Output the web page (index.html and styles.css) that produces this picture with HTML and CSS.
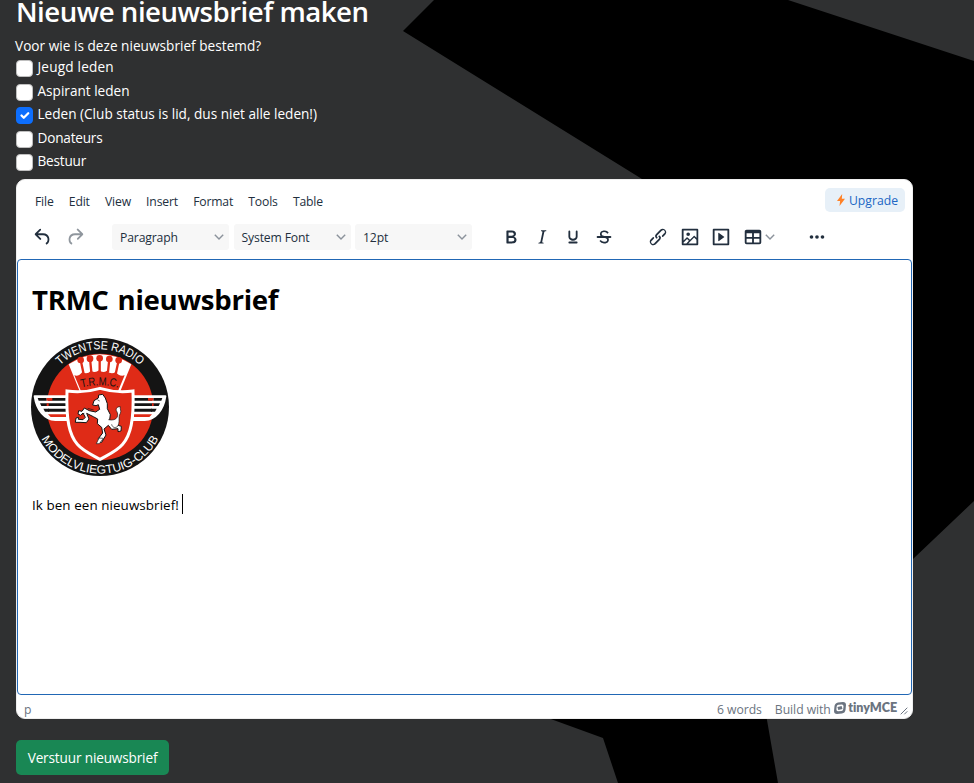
FILE: index.html
```html
<!DOCTYPE html>
<html lang="nl">
<head>
<meta charset="utf-8">
<title>Nieuwe nieuwsbrief maken</title>
<link rel="stylesheet" href="styles.css">
</head>
<body>
<svg class="backdrop" viewBox="0 0 974 783" aria-hidden="true"><path d="M434 0H788L974 61V501L913 559L760 680L778 783H618L603 738L548 718L642 179L403 31Z"/></svg>
<main class="page">
  <h1 class="title"><span>Nieuwe nieuwsbrief maken</span></h1>
  <p class="question">Voor wie is deze nieuwsbrief bestemd?</p>
  <div class="options">
    <label class="option"><i class="box"></i><span class="wide">Jeugd leden</span></label>
    <label class="option"><i class="box"></i><span>Aspirant leden</span></label>
    <label class="option"><i class="box checked"><svg viewBox="0 0 20 20"><path d="m6 10 3 3 6-6"/></svg></i><span>Leden (Club status is lid, dus niet alle leden!)</span></label>
    <label class="option"><i class="box"></i><span class="tight">Donateurs</span></label>
    <label class="option"><i class="box"></i><span class="tight">Bestuur</span></label>
  </div>
  <section class="editor">
    <header class="menubar">
      <nav class="menus"><span>File</span><span>Edit</span><span>View</span><span>Insert</span><span>Format</span><span>Tools</span><span>Table</span></nav>
      <a class="upgrade"><svg viewBox="0 0 8 12"><path d="M5.2 0 0 7h3.1L2.5 12 8 4.8H4.8Z"/></svg><span>Upgrade</span></a>
    </header>
    <div class="toolbar">
      <div class="group history">
        <svg class="icon" viewBox="0 0 24 24"><path d="M6.4 8H12c3.7 0 6.2 2 6.8 5.1.6 2.7-.4 5.6-2.3 6.8a1 1 0 0 1-1-1.8c1.1-.6 1.8-2.7 1.4-4.6-.5-2.1-2.1-3.5-4.9-3.5H6.4l3.3 3.3a1 1 0 1 1-1.4 1.4l-5-5a1 1 0 0 1 0-1.4l5-5a1 1 0 0 1 1.4 1.4L6.4 8Z"/></svg>
        <svg class="icon disabled" viewBox="0 0 24 24"><path d="M17.6 10H12c-2.8 0-4.4 1.4-4.9 3.5-.4 2 .3 4 1.4 4.6a1 1 0 1 1-1 1.8c-2-1.2-2.9-4.1-2.3-6.8.6-3 3-5.1 6.8-5.1h5.6l-3.3-3.3a1 1 0 1 1 1.4-1.4l5 5a1 1 0 0 1 0 1.4l-5 5a1 1 0 0 1-1.4-1.4l3.3-3.3Z"/></svg>
      </div>
      <div class="group selects">
        <div class="select"><span>Paragraph</span><svg class="chev" viewBox="0 0 10 10"><path d="m.8 2.8 4.2 4.3 4.2-4.3"/></svg></div>
        <div class="select"><span>System Font</span><svg class="chev" viewBox="0 0 10 10"><path d="m.8 2.8 4.2 4.3 4.2-4.3"/></svg></div>
        <div class="select"><span>12pt</span><svg class="chev" viewBox="0 0 10 10"><path d="m.8 2.8 4.2 4.3 4.2-4.3"/></svg></div>
      </div>
      <div class="group styles">
        <svg class="icon" viewBox="0 0 24 24"><path d="M7.8 19c-.3 0-.5 0-.6-.2l-.2-.5V5.7c0-.2 0-.4.2-.5l.6-.2h5c1.5 0 2.7.3 3.5 1 .7.6 1.1 1.4 1.1 2.5a3 3 0 0 1-.6 1.9c-.4.6-1 1-1.6 1.2.4.1.9.3 1.3.6s.8.7 1 1.2c.4.4.5 1 .5 1.6 0 1.3-.4 2.3-1.3 3-.8.7-2.1 1-3.8 1H7.8Zm5-8.3c.6 0 1.2-.1 1.6-.5.4-.3.6-.7.6-1.3 0-1.1-.8-1.7-2.3-1.7H9.3v3.5h3.4Zm.5 6c.7 0 1.3-.1 1.7-.4.4-.4.6-.9.6-1.5s-.2-1-.7-1.4c-.4-.3-1-.4-2-.4H9.4v3.8h4Z"/></svg>
        <svg class="icon" viewBox="0 0 24 24"><path d="m16.7 4.7-.1.9h-.3c-.6 0-1 0-1.4.3-.3.3-.4.6-.5 1.1l-2.1 9.8v.6c0 .5.4.8 1.4.8h.2l-.2.8H8l.2-.8h.2c1.1 0 1.8-.5 2-1.5l2-9.8.1-.5c0-.6-.4-.8-1.4-.8h-.3l.2-.9h5.8Z"/></svg>
        <svg class="icon" viewBox="0 0 24 24"><path d="M16 5c.6 0 1 .4 1 1v5.5a4 4 0 0 1-.4 1.8l-1 1.4a5.3 5.3 0 0 1-5.5 1 5 5 0 0 1-1.6-1c-.5-.4-.8-.9-1.1-1.4a4 4 0 0 1-.4-1.8V6c0-.6.4-1 1-1s1 .4 1 1v5.5c0 .3 0 .6.2 1l.6.7a3.3 3.3 0 0 0 2.2.8 3.4 3.4 0 0 0 2.2-.8c.3-.2.4-.5.6-.8l.2-.9V6c0-.6.4-1 1-1ZM8 17h8c.6 0 1 .4 1 1s-.4 1-1 1H8a1 1 0 0 1 0-2Z"/></svg>
        <svg class="icon" viewBox="0 0 24 24"><path d="M15.6 8.5c-.5-.7-1-1.1-1.3-1.3-.6-.4-1.3-.6-2-.6-2.7 0-2.8 1.7-2.8 2.1 0 1.6 1.8 2 3.2 2.3 4.4.9 4.6 2.8 4.6 3.9 0 1.4-.7 4.1-5 4.1A6.2 6.2 0 0 1 7 16.4l1.5-1.1c.4.6 1.6 2 3.7 2 1.6 0 2.5-.4 3-1.2.4-.8.3-2-.8-2.6-.7-.4-1.6-.7-2.9-1-1-.2-3.9-.8-3.9-3.6C7.6 6 10.3 5 12.4 5c2.9 0 4.2 1.6 4.7 2.4l-1.5 1.1Z"/><path d="M5 11h14a1 1 0 0 1 0 2H5a1 1 0 0 1 0-2Z"/></svg>
      </div>
      <div class="group inserts">
        <svg class="icon" viewBox="0 0 24 24"><path d="M6.2 12.3a1 1 0 0 1 1.4 1.4l-2 2a2 2 0 1 0 2.6 2.8l4.8-4.8a1 1 0 0 0 0-1.4 1 1 0 1 1 1.4-1.3 2.9 2.9 0 0 1 0 4L9.6 20a3.9 3.9 0 0 1-5.5-5.5l2-2Zm11.6-.6a1 1 0 0 1-1.4-1.4l2-2a2 2 0 1 0-2.6-2.8L11 10.3a1 1 0 0 0 0 1.4A1 1 0 1 1 9.6 13a2.9 2.9 0 0 1 0-4L14.4 4a3.9 3.9 0 0 1 5.5 5.5l-2 2Z"/></svg>
        <svg class="icon" viewBox="0 0 24 24"><path fill-rule="evenodd" d="m5 15.7 3.3-3.2c.3-.3.7-.3 1 0L12 15l4.1-4c.3-.4.8-.4 1 0l2 1.9V5H5v10.7ZM5 18V19h3l2.8-2.9-2-2L5 17.9Zm14-3-2.5-2.4-6.4 6.5H19v-4ZM4 3h16c.6 0 1 .4 1 1v16c0 .6-.4 1-1 1H4a1 1 0 0 1-1-1V4c0-.6.4-1 1-1Zm6 8a2 2 0 1 0 0-4 2 2 0 0 0 0 4Z"/></svg>
        <svg class="icon" viewBox="0 0 24 24"><path fill-rule="evenodd" d="M4 3h16c.6 0 1 .4 1 1v16c0 .6-.4 1-1 1H4a1 1 0 0 1-1-1V4c0-.6.4-1 1-1Zm1 2v14h14V5H5Zm4.8 2.6 5.6 4a.5.5 0 0 1 0 .8l-5.6 4A.5.5 0 0 1 9 16V8a.5.5 0 0 1 .8-.4Z"/></svg>
        <svg class="icon" viewBox="0 0 24 24"><path fill-rule="evenodd" d="M19 4a2 2 0 0 1 2 2v12a2 2 0 0 1-2 2H5a2 2 0 0 1-2-2V6c0-1.1.9-2 2-2h14ZM5 14v4h6v-4H5Zm14 0h-6v4h6v-4Zm0-6h-6v4h6V8ZM5 12h6V8H5v4Z"/></svg>
        <svg class="chev table-chev" viewBox="0 0 10 10"><path d="m.8 2.8 4.2 4.3 4.2-4.3"/></svg>
      </div>
      <svg class="icon" viewBox="0 0 24 24"><circle cx="6" cy="12" r="2"/><circle cx="12" cy="12" r="2"/><circle cx="18" cy="12" r="2"/></svg>
    </div>
    <article class="content">
      <h2><span>TRMC nieuwsbrief</span></h2>
      <svg class="badge" viewBox="33 24 414 414">
        <defs>
          <path id="arc-top" d="M67 231a173 173 0 0 1 346 0"/>
          <path id="arc-bottom" d="M40 231a200 200 0 0 0 400 0"/>
          <path id="arc-club" d="M176 175Q240 157 304 175"/>
        </defs>
        <circle cx="240" cy="231" r="207" fill="#141414"/>
        <circle cx="240" cy="231" r="160" fill="#df2b17"/>
        <path d="m146 103 35 85h118l35-85q-94-61-188 0Z" fill="#fff"/>
        <path d="M163 136q14 4 24-10 14 9 26-4 12 9 24-1 12 10 24 1 12 13 26 4 10 14 27 10l-21 50H184Z" fill="#df2b17"/>
        <g fill="#df2b17"><circle cx="182" cy="90" r="10"/><circle cx="210" cy="86" r="10"/><circle cx="239" cy="85" r="10"/><circle cx="268" cy="87" r="10"/><circle cx="296" cy="91" r="10"/></g>
        <path d="m182 90 9 43m19-47 4 40m25-41v43m29-41-4 39m32-35-9 42" stroke="#df2b17" stroke-width="7"/>
        <text class="badge-club"><textPath href="#arc-club" startOffset="50%" text-anchor="middle" textLength="112" lengthAdjust="spacingAndGlyphs">T.R.M.C.</textPath></text>
        <path d="M44 199h98v71h-36C73 269 50 240 44 199ZM338 199h98c-6 41-29 70-62 71h-36Z" fill="#fff" stroke="#fff" stroke-width="6" stroke-linejoin="round"/>
        <g fill="#141414"><path d="M53 204h27v8H56ZM60 220h24v8H64ZM70 236h17v9H75ZM400 204h27l-3 8h-24ZM396 220h24l-4 8h-20ZM393 236h17l-5 9h-12Z"/><path d="M84 204h54v8H84zm0 16h54v8H84zm0 16h54v9H84zM342 204h54v8h-54zm0 16h54v8h-54zm0 16h54v9h-54z"/></g>
        <path d="M80 204h17v8H80zm0 16h6v8h-6zm4 33h54v8H92zM384 204h16v8h-16zm12 16h5v8h-5zm-54 33h54l-8 8h-46z" fill="#df2b17"/>
        <path d="M141 183q50 7 99-8 49 15 99 8c3 88-7 132-31 160-19 22-43 31-68 45-25-14-49-23-68-45-24-28-34-72-31-160Z" fill="#df2b17" stroke="#fff" stroke-width="9"/>
        <path d="m236 195-1 9-13 8-4 13 10 2 7-3 4 14-12 8-19-4-15-8-7 10-10-2-2 10 8 4 7-7 7 13-7 7-14-1 1-6-8 2-2 13h14l19 1 8-11-7-17 20 10 13 7-1 14 13 11 3 17-13 17 2 12 8-1 13-22-6-18 13-11 10 12 19-2 0 9 9-2 1-14-22-7-13-13 2-15-9-18 0-15-6-17-8-11Z" fill="#fff" stroke="#141414" stroke-width="3"/>
        <path d="M265 269c28 6 33-15 24-27-2-7 2-12 12-12-2 7 4 12 0 20-8 12 1 27-9 40-9 6-16 0-17-7" fill="#fff" stroke="#141414" stroke-width="2"/>
        <path d="m237 324 13 1-12 16h-9Zm-5-115 7 4m-36 22 18 5m-28 10-8 3" fill="#fff" stroke="#141414" stroke-width="2"/>
        <text class="badge-text badge-text-top"><textPath href="#arc-top" startOffset="50%" text-anchor="middle" textLength="264" lengthAdjust="spacingAndGlyphs">TWENTSE RADIO</textPath></text>
        <text class="badge-text badge-text-bottom"><textPath href="#arc-bottom" startOffset="50%" text-anchor="middle" textLength="430" lengthAdjust="spacingAndGlyphs">MODELVLIEGTUIG-CLUB</textPath></text>
      </svg>
      <p><span>Ik ben een nieuwsbrief!</span><i class="caret"></i></p>
    </article>
    <footer class="status">
      <span class="path">p</span>
      <span class="words">6 words</span>
      <span class="build">Build with</span>
      <span class="brand"><svg viewBox="0 0 12 12"><path fill-rule="evenodd" d="M4 .5 9 0q3 0 3 3L11.5 8q-.5 3-3.5 3.5L3 12q-3 0-3-3L.5 4Q1 1 4 .5ZM4.4 2.8Q2.9 3 2.7 4.5L2.4 7.6q0 1.8 1.7 1.7L7.5 9Q9 8.8 9.2 7.3L9.5 4.2q0-1.8-1.7-1.7Z"/><path d="m3.4 5 4.2-1.1.9 3-4.2 1.1Z"/></svg><b>tinyMCE</b></span>
      <svg class="grip" viewBox="0 0 8 8"><path d="M.7 7.3 7.3.7M4.3 7.3l3-3"/></svg>
    </footer>
  </section>
  <button class="send"><span>Verstuur nieuwsbrief</span></button>
</main>
</body>
</html>
```

FILE: styles.css
```css
* { box-sizing: border-box; }
body {
  margin: 0;
  height: 783px;
  overflow: hidden;
  background: #2f3031;
  color: #fff;
  font-family: "Open Sans", "Noto Sans", sans-serif;
  font-size: 13.6px;
}
.backdrop { position: absolute; inset: 0; width: 974px; height: 783px; filter: blur(.6px); }
.page { position: relative; padding: 0 16px; display: flex; flex-direction: column; align-items: flex-start; }
.title { margin: 0; height: 36px; font-size: 27.6px; line-height: 22px; font-weight: 600; letter-spacing: -.49px; white-space: nowrap; }
.question { margin: 0 0 0 -1px; height: 20px; line-height: 20px; letter-spacing: .03px; white-space: nowrap; }
.options { display: flex; flex-direction: column; height: 123px; }
.option { display: flex; height: 23.5px; gap: 4.5px; line-height: 22px; white-space: nowrap; }
.wide { letter-spacing: .2px; }
.tight { letter-spacing: -.2px; }
.box { width: 17px; height: 17px; margin-top: 4px; border-radius: 4px; background: #fff; border: 1px solid #bfbfbf; }
.box.checked { background: #0d6efd; border-color: #0d6efd; }
.box svg { display: block; width: 15px; height: 15px; fill: none; stroke: #fff; stroke-width: 3; stroke-linecap: round; stroke-linejoin: round; }

.editor { width: 897px; height: 540px; background: #fff; border: 1px solid #eee; border-radius: 9px; display: flex; flex-direction: column; color: #222f3e; font-size: 12.2px; overflow: hidden; }
.menubar { height: 40px; display: flex; justify-content: space-between; padding: 8px 7px 0 18px; }
.menus { display: flex; gap: 15.2px; line-height: 27px; letter-spacing: -.17px; }
.upgrade { width: 80px; height: 24px; border-radius: 5px; background: #e7f0f8; color: #2066c4; display: flex; align-items: center; justify-content: center; gap: 4px; padding-left: 5px; font-size: 12.2px; }
.upgrade svg { width: 8px; height: 12px; fill: #ff8126; }
.toolbar { height: 39px; display: flex; align-items: flex-start; padding: 6px 0 0 14.5px; }
.toolbar > * { height: 22px; }
.group { display: flex; align-items: center; }
.icon { width: 22px; height: 22px; fill: #222f3e; flex: none; }
.toolbar > .icon { margin-left: 31px; }
.history { gap: 10.5px; margin-right: 26px; }
.disabled { opacity: .5; }
.selects { gap: 4.5px; }
.select { width: 117px; height: 26px; background: #f7f7f7; border-radius: 3px; display: flex; align-items: center; justify-content: space-between; padding: 0 5px 0 8px; letter-spacing: -.15px; }
.chev { width: 10px; height: 10px; fill: none; stroke: #8b929b; stroke-width: 1.4; }
.styles { gap: 9.3px; margin-left: 27.5px; }
.inserts { gap: 9.4px; margin-left: 32px; }
.table-chev { margin-left: -8px; }
.content { flex: 1; border: 1.5px solid #2167b5; border-radius: 4px; padding: 19px 13px; color: #000; }
.content h2 { margin: 0 0 0 1px; height: 59px; font-size: 27.6px; line-height: 40px; font-weight: 700; letter-spacing: -.28px; word-spacing: 2px; white-space: nowrap; }
.badge { display: block; width: 138px; height: 138px; }
.badge-text { font-family: "Liberation Sans", sans-serif; fill: #fff; }
.badge-text-top { font-size: 36px; }
.badge-text-bottom { font-size: 36px; }
.badge-club { font-family: "Liberation Sans", sans-serif; font-size: 35px; fill: #141414; }
.content p { margin: 18px 0 0 1px; display: flex; height: 22px; align-items: center; font-size: 13.4px; letter-spacing: .08px; gap: 3px; }
.caret { width: 1px; height: 20px; margin-top: -2px; background: #000; }
.status { height: 23px; display: flex; padding: 0 4px 0 7px; color: #6b7480; line-height: 29px; white-space: nowrap; letter-spacing: -.05px; }
.words { margin-left: auto; }
.build { margin-left: 13px; }
.brand { display: flex; align-items: center; height: 26px; margin-left: 3.5px; gap: 2px; }
.brand svg { width: 12px; height: 12px; fill: #6b7480; }
.brand b { font: 800 12.5px/22px Lato, sans-serif; }
.grip { width: 8px; height: 8px; margin: 12px 0 0 3px; stroke: #6b7480; fill: none; }
.send { margin-top: 21px; width: 153px; height: 35px; border: 0; border-radius: 5px; background: #198754; color: #fff; font: inherit; letter-spacing: -.15px; padding: 0; white-space: nowrap; }
```
